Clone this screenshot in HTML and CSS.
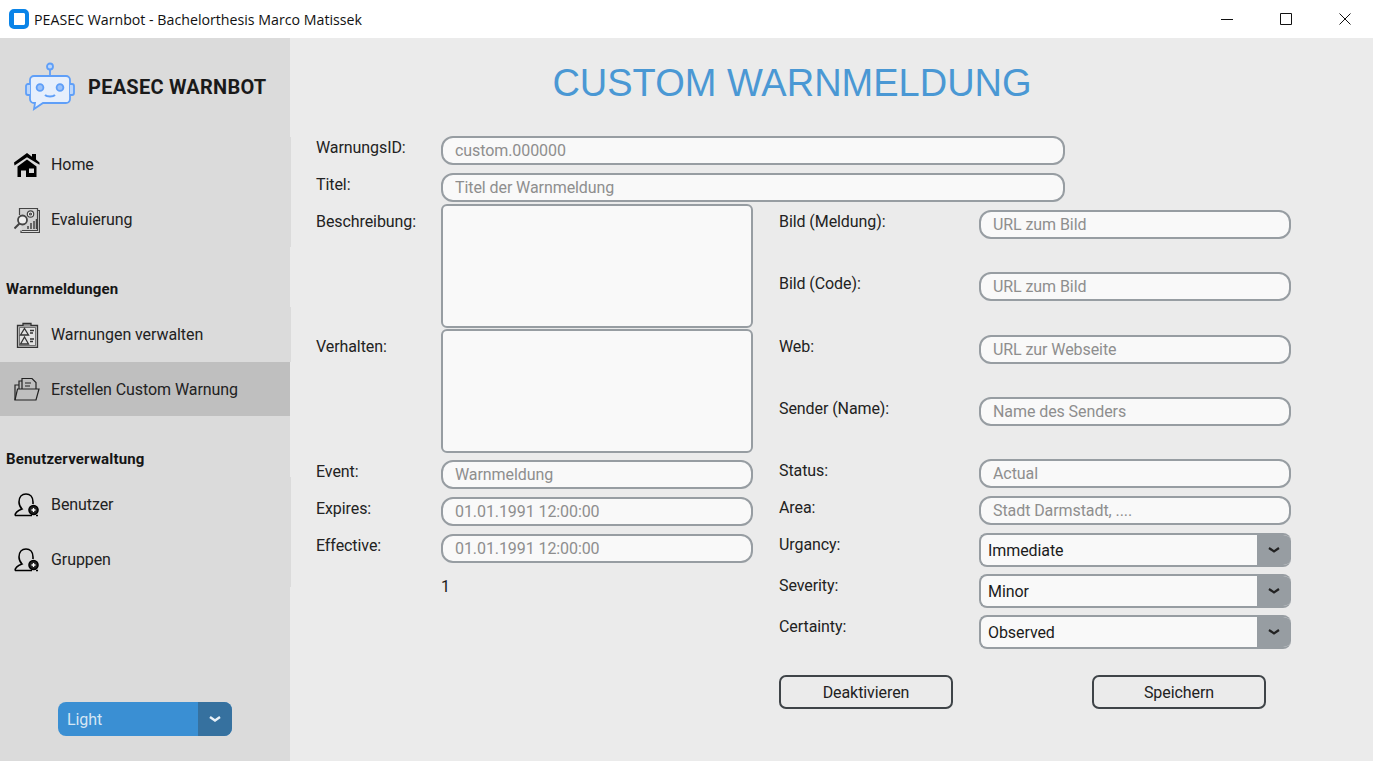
FILE: index.html
```html
<!DOCTYPE html>
<html lang="de">
<head>
    <meta charset="UTF-8" />
    <meta name="viewport" content="width=device-width, initial-scale=1.0">
    <title>PEASEC Warnbot</title>
    <link rel="stylesheet" href="styles.css">
</head>
<body>
    <header class="titlebar">
        <span class="app-icon"></span>
        <span class="app-title">PEASEC Warnbot - Bachelorthesis Marco Matissek</span>
        <div class="win-buttons">
            <svg viewBox="0 0 12 12" width="12" height="12"><path d="M0 6.5h12" stroke="#111" fill="none"/></svg>
            <svg viewBox="0 0 12 12" width="12" height="12"><path d="M.5.5h11v11H.5z" stroke="#111" fill="none"/></svg>
            <svg viewBox="0 0 12 12" width="12" height="12"><path d="M.5.5l11 11M11.5.5l-11 11" stroke="#111" fill="none"/></svg>
        </div>
    </header>

    <div class="app">
        <aside class="sidebar">
            <div class="brand">
                <svg class="brand-logo" viewBox="0 0 52 52" width="52" height="52" fill="none" stroke="#5f9ff8" stroke-width="1.8">
                    <circle cx="26" cy="4.500" r="3" fill="#bcd6fa"/>
                    <path d="M26 7.500v6"/>
                    <path d="M10 14h32a4 4 0 0 1 4 4v19a4 4 0 0 1-4 4H19l-9 6 1-6h-1a4 4 0 0 1-4-4V18a4 4 0 0 1 4-4z" fill="#e6effc"/>
                    <path d="M6 22H4a2 2 0 0 0-2 2v7a2 2 0 0 0 2 2h2M46 22h2a2 2 0 0 1 2 2v7a2 2 0 0 1-2 2h-2" fill="#bcd6fa"/>
                    <circle cx="16" cy="25.500" r="3.400" fill="#9cc2f9"/>
                    <circle cx="36" cy="25.500" r="3.400" fill="#9cc2f9"/>
                    <path d="M21 33c2 2 8 2 10 0" stroke-width="2"/>
                </svg>
                <span class="brand-name">PEASEC WARNBOT</span>
            </div>

            <nav class="nav">
                <a class="nav-item">
                    <svg class="nav-icon" viewBox="0 0 26 24" width="26" height="24"><path d="M0 9.500L13 0l5 3.700V1h4v5.600l3.500 2.900v2.300L13 4.300.5 12.500z" fill="#000"/><path d="M3.500 13.500L13 6.500l9.500 7V24H3.500zM7 17.500V24h5v-6.500zM15 15.500V20h5v-4.500z" fill="#000" fill-rule="evenodd"/></svg>
                    Home
                </a>
                <a class="nav-item">
                    <svg class="nav-icon" viewBox="0 0 26 26" width="26" height="26" fill="none" stroke="#444" stroke-width="1.200"><path d="M5.500 8V1.500h18v22H8" fill="#d2d2d2"/><path d="M23.500 3.500H25.500v22H7v-2"/><circle cx="16.500" cy="7" r="3.200" fill="#eee"/><circle cx="16.500" cy="7" r="1"/><circle cx="8.500" cy="13" r="4.500" stroke-width="1.800" fill="#eee"/><path d="M5.500 16.500l-5 5" stroke-width="2"/><path d="M14 22v-3M17 22v-6M20 22v-8M22.500 22V12" stroke-width="1.500"/></svg>
                    Evaluierung
                </a>

                <h3 class="nav-heading">Warnmeldungen</h3>
                <a class="nav-item">
                    <svg class="nav-icon" viewBox="0 0 26 26" width="26" height="26" fill="none" stroke="#333" stroke-width="1.300"><path d="M3.500 3.500h20v22h-20z" fill="#c9c9c9"/><path d="M5.500 5.500h16v18h-16z" stroke-width=".6" fill="#e2e2e2"/><path d="M9 4V1.500h8V4" fill="#999"/><path d="M10.500 6.500l4 6.500h-8zM10.500 15l4 7h-8z"/><path d="M16 8.500h4M16 11h3M16 17h4M16 19.500h3"/></svg>
                    Warnungen verwalten
                </a>
                <a class="nav-item active">
                    <svg class="nav-icon" viewBox="0 0 26 24" width="26" height="24" fill="none" stroke="#222" stroke-width="1.200"><path d="M1 23L3.500 12H25l-3 11z"/><path d="M1 23V8h4M5 12V4h3"/><path d="M8 12V1.500h10l4 4V12"/><path d="M11 6h6M11 9h5"/></svg>
                    Erstellen Custom Warnung
                </a>

                <h3 class="nav-heading">Benutzerverwaltung</h3>
                <a class="nav-item">
                    <svg class="nav-icon" viewBox="0 0 26 24" width="26" height="24" fill="none" stroke="#000" stroke-width="1.600"><path d="M1 22.500h17M22 22.500h2"/><path d="M1 22.500c0-3 3-5 7-6.500-2-2-3-4-3-7 0-5 3-8 7-8s7 3 7 8v2"/><circle cx="19.500" cy="17" r="4.500" fill="#222"/><path d="M19.500 15v4M17.500 17h4" stroke="#fff" stroke-width="1.300"/></svg>
                    Benutzer
                </a>
                <a class="nav-item">
                    <svg class="nav-icon" viewBox="0 0 26 24" width="26" height="24" fill="none" stroke="#000" stroke-width="1.600"><path d="M1 22.500h17M22 22.500h2"/><path d="M1 22.500c0-3 3-5 7-6.500-2-2-3-4-3-7 0-5 3-8 7-8s7 3 7 8v2"/><circle cx="19.500" cy="17" r="4.500" fill="#222"/><path d="M19.500 15v4M17.500 17h4" stroke="#fff" stroke-width="1.300"/></svg>
                    Gruppen
                </a>
            </nav>

            <div class="theme-select">
                <span class="theme-value">Light</span>
                <span class="theme-arrow">
                    <svg viewBox="0 0 12 8" width="12" height="8"><path d="M1 2l5 3.500L11 2" stroke="#e8f1f8" stroke-width="2.400" fill="none"/></svg>
                </span>
            </div>
        </aside>

        <main class="content">
            <h1 class="page-title">CUSTOM WARNMELDUNG</h1>

            <form class="warn-form">
                <div class="wide-row">
                    <label class="lbl">WarnungsID:</label>
                    <input class="field" type="text" placeholder="custom.000000">
                </div>
                <div class="wide-row">
                    <label class="lbl">Titel:</label>
                    <input class="field" type="text" placeholder="Titel der Warnmeldung">
                </div>

                <div class="columns">
                    <div class="col-left">
                        <div class="area-row">
                            <label class="lbl lbl-area">Beschreibung:</label>
                            <textarea class="field-area"></textarea>
                        </div>
                        <div class="area-row">
                            <label class="lbl lbl-area">Verhalten:</label>
                            <textarea class="field-area"></textarea>
                        </div>
                        <div class="short-rows">
                            <div class="row">
                                <label class="lbl">Event:</label>
                                <input class="field" type="text" placeholder="Warnmeldung">
                            </div>
                            <div class="row">
                                <label class="lbl">Expires:</label>
                                <input class="field" type="text" placeholder="01.01.1991 12:00:00">
                            </div>
                            <div class="row">
                                <label class="lbl">Effective:</label>
                                <input class="field" type="text" placeholder="01.01.1991 12:00:00">
                            </div>
                        </div>
                        <div class="counter">1</div>
                    </div>

                    <div class="col-right">
                        <div class="url-rows">
                            <div class="row-r">
                                <label class="lbl">Bild (Meldung):</label>
                                <input class="field" type="text" placeholder="URL zum Bild">
                            </div>
                            <div class="row-r">
                                <label class="lbl">Bild (Code):</label>
                                <input class="field" type="text" placeholder="URL zum Bild">
                            </div>
                            <div class="row-r">
                                <label class="lbl">Web:</label>
                                <input class="field" type="text" placeholder="URL zur Webseite">
                            </div>
                            <div class="row-r">
                                <label class="lbl">Sender (Name):</label>
                                <input class="field" type="text" placeholder="Name des Senders">
                            </div>
                        </div>
                        <div class="short-rows">
                            <div class="row-r">
                                <label class="lbl">Status:</label>
                                <input class="field" type="text" placeholder="Actual">
                            </div>
                            <div class="row-r">
                                <label class="lbl">Area:</label>
                                <input class="field" type="text" placeholder="Stadt Darmstadt, ....">
                            </div>
                        </div>
                        <div class="select-rows">
                            <div class="row-r">
                                <label class="lbl">Urgancy:</label>
                                <div class="combo"><span class="combo-value">Immediate</span><span class="combo-arrow"><svg viewBox="0 0 12 8" width="12" height="8"><path d="M1 2l5 3.500L11 2" stroke="#222" stroke-width="2.200" fill="none"/></svg></span></div>
                            </div>
                            <div class="row-r">
                                <label class="lbl">Severity:</label>
                                <div class="combo"><span class="combo-value">Minor</span><span class="combo-arrow"><svg viewBox="0 0 12 8" width="12" height="8"><path d="M1 2l5 3.500L11 2" stroke="#222" stroke-width="2.200" fill="none"/></svg></span></div>
                            </div>
                            <div class="row-r">
                                <label class="lbl">Certainty:</label>
                                <div class="combo"><span class="combo-value">Observed</span><span class="combo-arrow"><svg viewBox="0 0 12 8" width="12" height="8"><path d="M1 2l5 3.500L11 2" stroke="#222" stroke-width="2.200" fill="none"/></svg></span></div>
                            </div>
                        </div>
                        <div class="actions">
                            <button class="btn" type="button">Deaktivieren</button>
                            <button class="btn" type="button">Speichern</button>
                        </div>
                    </div>
                </div>
            </form>
        </main>
    </div>
</body>
</html>
```

FILE: styles.css
```css
* {
    box-sizing: border-box;
}
html, body {
    height: 100%;
}
body {
    margin: 0;
    font-family: Roboto, "Liberation Sans", sans-serif;
    font-size: 16px;
    letter-spacing: -.08px;
    color: #1b1b1b;
    background: #ebebeb;
    overflow: hidden;
    display: flex;
    flex-direction: column;
}

/* window title bar */
.titlebar {
    height: 38px;
    flex: none;
    background: #fff;
    display: flex;
    align-items: center;
    padding-left: 9px;
}
.app-icon {
    width: 20px;
    height: 20px;
    border-radius: 5px;
    background: #0a84e8;
    border: 4px solid #0a84e8;
    border-left-width: 5px;
    border-top-width: 4px;
    box-shadow: inset 0 0 0 8px #fff;
    margin-right: 5px;
}
.app-title {
    font-family: "Open Sans", sans-serif;
    font-size: 14.2px;
    letter-spacing: 0;
    color: #111;
}
.win-buttons {
    margin-left: auto;
    display: flex;
    gap: 47px;
    padding-right: 22px;
}

/* sidebar */
.app {
    flex: 1;
    display: flex;
    min-height: 0;
}
.sidebar {
    width: 290px;
    flex: none;
    background: #dbdbdb;
    display: flex;
    flex-direction: column;
    padding-bottom: 25px;
}
.brand {
    height: 99px;
    display: flex;
    align-items: center;
    padding: 0 0 0 24px;
    gap: 12px;
}
.brand-logo {
    margin-top: 1px;
}
.brand-name {
    font-weight: 700;
    font-size: 20px;
    letter-spacing: .25px;
    margin-top: -2px;
    color: #1a1a1a;
}
.nav {
    display: flex;
    flex-direction: column;
}
.nav-item {
    width: 291px;
    height: 55px;
    display: flex;
    align-items: center;
    padding-left: 14px;
    background: #dbdbdb;
    color: #222;
}
.nav-icon {
    width: 26px;
    margin-right: 11px;
    flex: none;
}
.nav-item.active {
    width: 290px;
    height: 54px;
    background: #bfbfbf;
}
.nav-heading {
    margin: 0;
    height: 60px;
    padding: 33px 0 0 6px;
    font-size: 15px;
    line-height: 18px;
    font-weight: 700;
    letter-spacing: .17px;
    color: #151515;
}
.active + .nav-heading {
    height: 61px;
    padding-top: 34px;
}
.theme-select {
    margin: auto 0 0 58px;
    width: 174px;
    height: 34px;
    display: flex;
    border-radius: 8px;
    overflow: hidden;
    background: #3a8fd3;
}
.theme-value {
    flex: 1;
    padding-left: 9px;
    line-height: 36px;
    color: #d5e6f4;
}
.theme-arrow {
    width: 34px;
    background: #36719f;
    display: flex;
    align-items: center;
    justify-content: center;
}

/* main area */
.content {
    flex: 1;
    padding: 0 82px 0 26px;
}
.page-title {
    margin: 0;
    height: 98px;
    padding: 21px 0 0 0;
    width: 952px;
    text-align: center;
    font-family: "Liberation Sans", sans-serif;
    font-weight: 400;
    font-size: 38px;
    letter-spacing: 0;
    line-height: 48px;
    color: #4a98d4;
}
.warn-form {
    display: flex;
    flex-direction: column;
}
.lbl {
    display: block;
    padding-top: 2px;
    line-height: 20px;
    color: #222;
}
.wide-row {
    display: grid;
    grid-template-columns: 125px 624px;
    margin-bottom: 8px;
}
.wide-row:nth-child(2) {
    margin-bottom: 2px;
}
.field {
    display: block;
    width: 100%;
    height: 29px;
    padding: 0 12px;
    border: 2px solid #979da2;
    border-radius: 12px;
    background: #f9f9f9;
    font: inherit;
    letter-spacing: inherit;
    color: #222;
    outline: none;
}
.field::placeholder {
    color: #8e8e8e;
    opacity: 1;
}
.field-area {
    display: block;
    width: 312px;
    height: 124px;
    border: 2px solid #979da2;
    border-radius: 6px;
    background: #f9f9f9;
    resize: none;
    outline: none;
}
.columns {
    display: flex;
    gap: 26px;
}
.col-left {
    width: 437px;
}
.col-right {
    width: 512px;
    padding-top: 5.9px;
}
.area-row {
    display: grid;
    grid-template-columns: 125px 312px;
    margin-bottom: 1px;
}
.lbl-area {
    padding-top: 8px;
}
.area-row + .area-row {
    margin-bottom: 7px;
}
.short-rows {
    display: flex;
    flex-direction: column;
    gap: 8px;
}
.row {
    display: grid;
    grid-template-columns: 125px 312px;
}
.row-r {
    display: grid;
    grid-template-columns: 200px 312px;
}
.url-rows {
    display: flex;
    flex-direction: column;
    gap: 33.5px;
    margin-bottom: 33.1px;
}
.counter {
    margin: 14px 0 0 125px;
    line-height: 20px;
}
.select-rows {
    display: flex;
    flex-direction: column;
    gap: 7px;
    margin-top: 8px;
}
.combo {
    height: 34px;
    display: flex;
    border: 2px solid #979da2;
    border-right: none;
    border-radius: 8px;
    overflow: hidden;
    background: #f9f9f9;
}
.combo-value {
    flex: 1;
    padding-left: 7px;
    line-height: 32px;
    color: #1b1b1b;
}
.combo-arrow {
    width: 34px;
    background: #979da2;
    display: flex;
    align-items: center;
    justify-content: center;
}
.actions {
    display: flex;
    gap: 139px;
    margin-top: 26px;
}
.btn {
    width: 174px;
    height: 34px;
    border: 2px solid #3f4448;
    border-radius: 7px;
    background: transparent;
    font: inherit;
    letter-spacing: inherit;
    color: #222;
}
```
